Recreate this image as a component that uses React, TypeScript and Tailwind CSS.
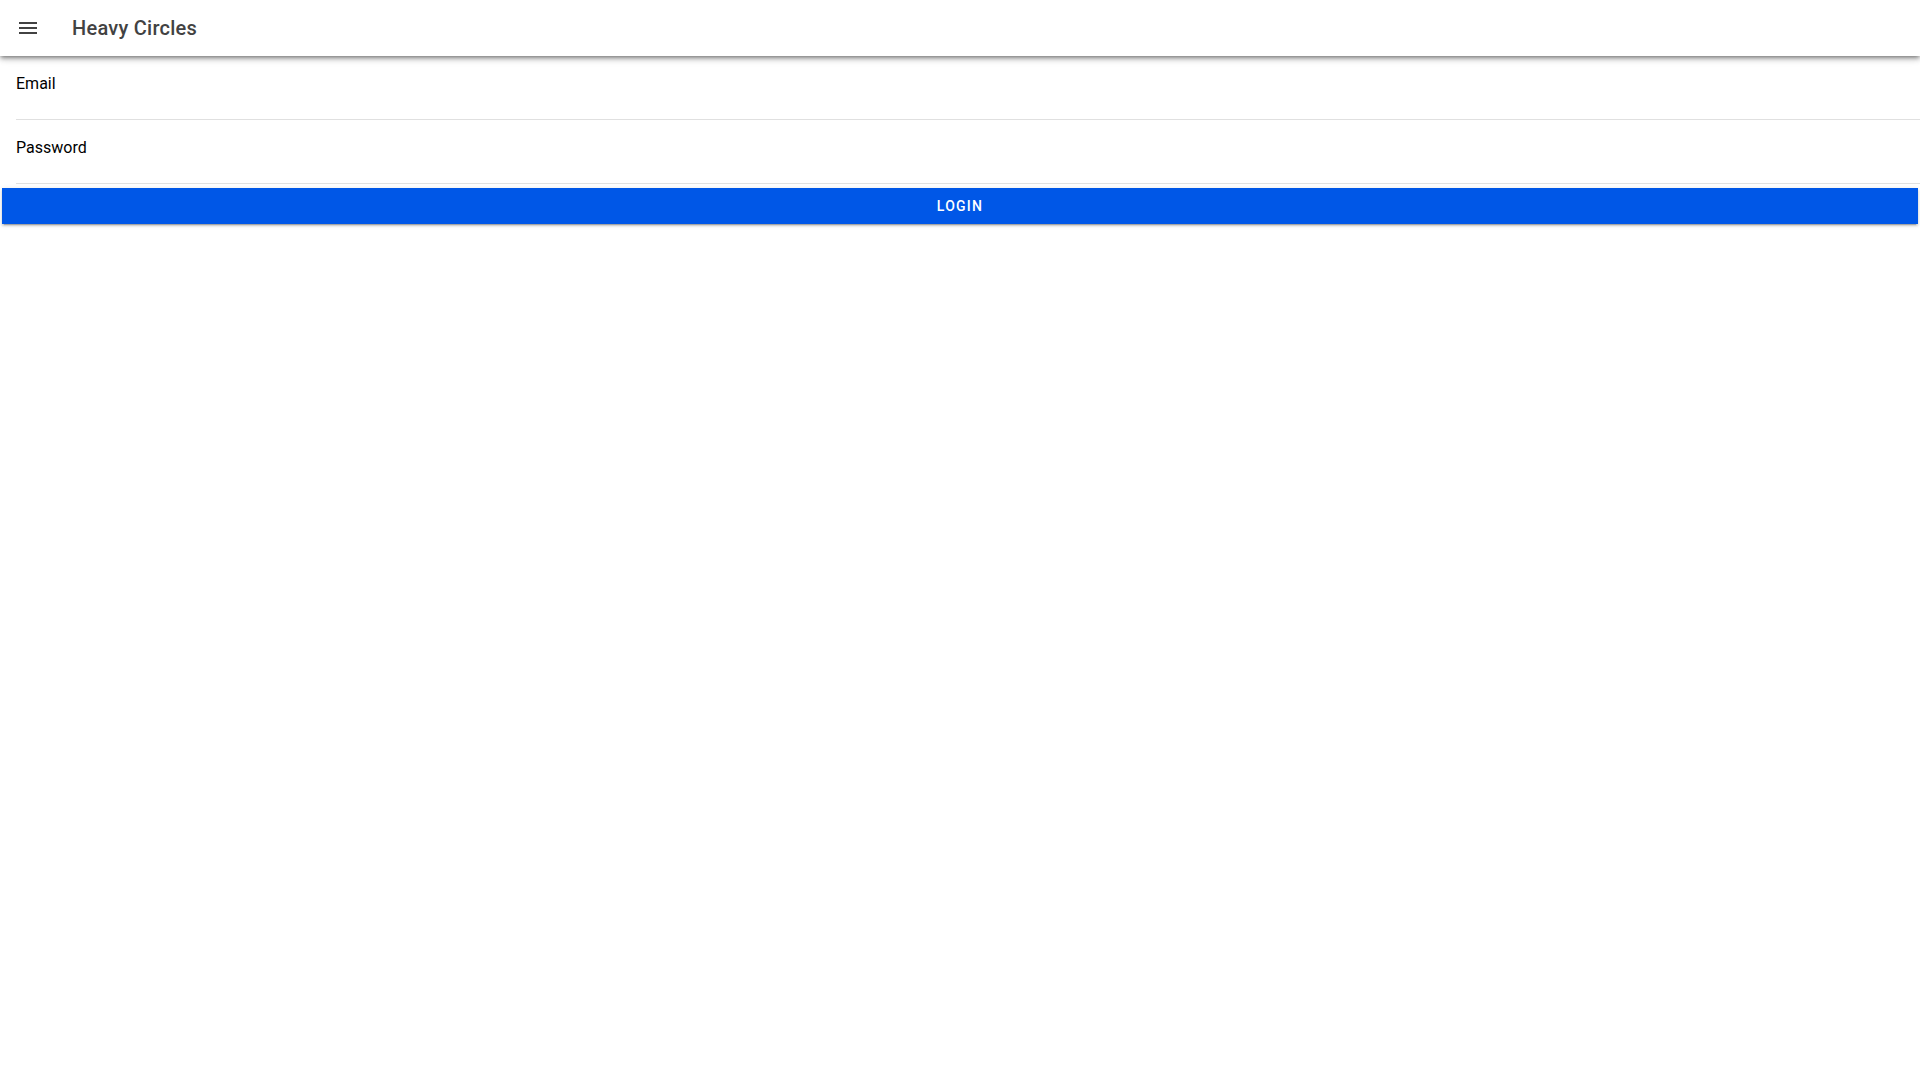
export default function App() {
  return (
    <div className="min-h-screen bg-white font-['Roboto','Liberation_Sans',sans-serif]">
      <header className="relative z-10 flex h-14 items-center bg-white shadow-[0_2px_4px_-1px_rgba(0,0,0,0.45),0_4px_5px_0_rgba(0,0,0,0.14),0_1px_10px_0_rgba(0,0,0,0.12)]">
        <button className="ml-4 flex h-6 w-6 items-center justify-center text-[#424242]">
          <svg viewBox="0 0 24 24" width="24" height="24" fill="currentColor">
            <path d="M3 18h18v-2H3v2zm0-5h18v-2H3v2zm0-7v2h18V6H3z" />
          </svg>
        </button>
        <h1 className="ml-8 text-[20px] font-medium tracking-[0.0125em] text-[#424242]">Heavy Circles</h1>
      </header>

      <form className="flex flex-col">
        <label className="ml-4 flex h-16 flex-col border-b border-[#e0e0e0] pt-4">
          <span className="text-[16px] leading-6 text-black">Email</span>
          <input type="email" className="outline-none" />
        </label>
        <label className="ml-4 flex h-16 flex-col border-b border-[#e0e0e0] pt-4">
          <span className="text-[16px] leading-6 text-black">Password</span>
          <input type="password" className="outline-none" />
        </label>
        <div className="mx-[2px] mt-1">
          <button
            type="button"
            className="flex h-9 w-full items-center justify-center bg-[#0057e7] text-[14px] font-medium uppercase tracking-[0.089em] text-white shadow-[0_3px_1px_-2px_rgba(0,0,0,0.2),0_2px_2px_0_rgba(0,0,0,0.14),0_1px_5px_0_rgba(0,0,0,0.12)]"
          >
            Login
          </button>
        </div>
      </form>
    </div>
  );
}
